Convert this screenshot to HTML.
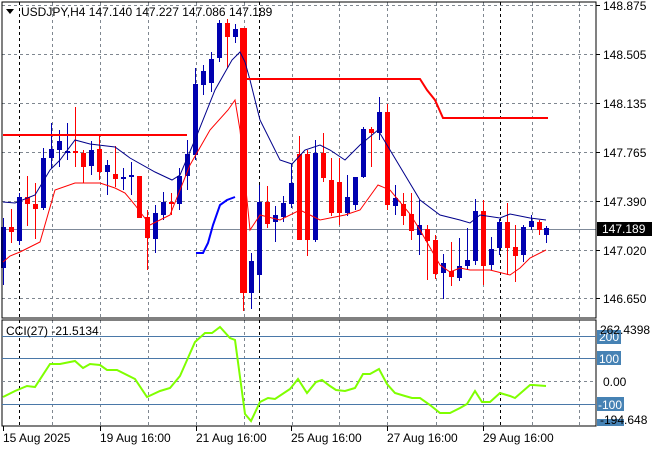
<!DOCTYPE html>
<html><head><meta charset="utf-8"><style>
html,body{margin:0;padding:0;background:#fff;width:660px;height:450px;overflow:hidden}
svg{display:block;font-family:"Liberation Sans","DejaVu Sans",sans-serif}
</style></head><body>
<svg id="s" width="660" height="450" xmlns="http://www.w3.org/2000/svg">
<rect width="660" height="450" fill="#fff"/>
<g id="grid" stroke="#7f8790" stroke-width="1" stroke-dasharray="3,3"></g>
<g id="sep" stroke="#000" stroke-width="1" stroke-dasharray="3,3"></g>
<line x1="2" y1="229.5" x2="596" y2="229.5" stroke="#7f8a99"/>
<g id="c"></g>
<polyline fill="none" stroke="#00008b" stroke-width="1" points="3,202 15,203 35,195 50,170 60,160 75,140 90,144 115,147 130,158 155,172 172,180 180,175 197,135 215,90 232,60 240,52 245,62 250,80 260,120 280,160 292,164 305,150 320,145 330,150 345,160 360,145 378,130 390,150 420,200 440,215 460,220 470,223 480,215 500,218 510,214 530,218 546,220"/>
<polyline fill="none" stroke="#ff0000" stroke-width="1" points="3,262 10,256 20,252 40,242 55,190 75,183 100,183 115,188 125,193 135,205 150,225 170,215 190,165 210,130 228,110 235,100 240,130 250,230 260,215 280,220 300,210 310,215 320,220 345,215 360,210 378,185 390,190 410,214 420,230 440,265 450,272 460,268 470,270 490,270 510,275 520,268 530,258 546,250"/>
<polyline fill="none" stroke="#0000ff" stroke-width="2" points="196,253 203,253 208,243 213,225 220,205 227,200 235,197"/>
<polyline fill="none" stroke="#ff0000" stroke-width="2" points="3,135 187,135"/>
<polyline fill="none" stroke="#ff0000" stroke-width="2" points="245,79 420,79 427,90 435,100 443,118 548,118"/>
<rect x="2" y="2" width="594" height="316" fill="none" stroke="#000"/>
<rect x="2" y="320" width="594" height="106" fill="none" stroke="#000"/>
<g stroke="#4a78a8">
<line x1="2" y1="336.5" x2="596" y2="336.5"/><line x1="2" y1="358.5" x2="596" y2="358.5"/><line x1="2" y1="404.5" x2="596" y2="404.5"/></g>
<line x1="2" y1="381.5" x2="596" y2="381.5" stroke="#7f8790" stroke-dasharray="3,3"/>
<polyline fill="none" stroke="#7fff00" stroke-width="2" points="3,397 15,391 27,386 35,387 50,364 60,364 75,361 83,368 90,364 100,365 107,370 117,370 135,379 147,397 160,391 170,388 180,376 195,342 205,333 212,333 220,327 230,338 235,340 245,414 251,421 260,402 268,398 275,399 290,389 298,379 307,393 316,382 322,380 330,386 336,390 345,391 355,388 363,374 370,374 379,369 387,384 395,393 405,396 412,398 420,398 430,405 440,413 450,413 460,408 467,404 475,391 482,402 490,402 500,393 510,396 515,398 530,385 533,385 546,386"/>
<g font-size="12" fill="#000">
<path d="M6 9 L14 9 L10 14 Z" fill="#000"/>
<text x="21" y="16">USDJPY,H4  147.140 147.227 147.086 147.189</text>
<text x="6" y="335">CCI(27) -21.5134</text>
<g id="ax"></g>
</g>
<rect x="597" y="222" width="55" height="14" fill="#000"/>
<text x="602" y="233" font-size="12" fill="#fff">147.189</text>
<rect x="597" y="330" width="24" height="14" fill="#4682b4"/>
<rect x="597" y="351" width="24" height="14" fill="#4682b4"/>
<rect x="597" y="397" width="27" height="14" fill="#4682b4"/>
<rect x="597" y="419" width="27" height="7" fill="#4682b4"/>
<g font-size="12" fill="#fff"><text x="599" y="341">200</text><text x="599" y="363">100</text><text x="598" y="409">-100</text></g>
<g font-size="12" fill="#000"><text x="600" y="334">262.4398</text><text x="603" y="386">0.00</text><text x="600" y="424">-194.648</text></g>
</svg>
<script>
var NS="http://www.w3.org/2000/svg";
function el(p,t,a){var e=document.createElementNS(NS,t);for(var k in a)e.setAttribute(k,a[k]);p.appendChild(e);return e;}
var g=document.getElementById('grid');
[5,54,103,152,201,250,298].forEach(function(y){el(g,'line',{x1:2,x2:596,y1:y+.5,y2:y+.5});});
[52,100,148,196,244,292,339,387,436,483,532,579].forEach(function(x){el(g,'line',{x1:x+.5,x2:x+.5,y1:2,y2:318});el(g,'line',{x1:x+.5,x2:x+.5,y1:320,y2:426});});
var s=document.getElementById('sep');
[19,259,500].forEach(function(x){el(s,'line',{x1:x+.5,x2:x+.5,y1:2,y2:318});el(s,'line',{x1:x+.5,x2:x+.5,y1:320,y2:426});});
var B='#0000b0',R='#ff0000';
var C=[[3,227,268,218,285,B],[11,227,232,209,243,R],[19,197,241,193,245,B],[27,197,204,176,226,R],[35,204,209,183,239,R],[43,158,208,148,210,B],[51,149,158,123,168,B],[59,141,150,130,167,B],[67,151,153,123,160,B],[75,151,153,107,167,R],[83,153,167,150,183,R],[91,150,166,141,175,B],[99,149,172,136,180,R],[107,165,172,160,195,B],[115,174,179,146,187,R],[123,177,179,168,190,B],[131,175,177,162,195,B],[139,176,218,176,218,R],[147,217,238,210,270,R],[155,213,239,205,253,B],[163,202,215,192,220,B],[171,202,204,193,215,R],[179,176,204,168,210,B],[187,154,176,140,190,B],[195,84,155,68,160,B],[203,71,85,65,95,B],[211,59,83,52,92,B],[219,23,58,20,62,B],[227,23,37,19,68,R],[235,29,37,24,43,B],[243,28,293,28,311,R],[251,261,293,253,309,B],[259,202,275,185,290,B],[267,202,224,186,228,R],[275,215,222,206,242,B],[283,203,217,196,222,B],[291,183,204,164,208,B],[299,154,240,136,240,R],[307,154,240,150,256,R],[315,153,240,140,242,B],[323,153,178,133,182,R],[331,180,213,158,216,R],[339,182,213,158,225,R],[347,197,213,175,216,B],[355,177,205,177,210,B],[363,129,177,127,178,B],[371,129,133,127,167,R],[379,112,133,97,140,B],[387,112,205,104,210,R],[395,198,206,185,215,B],[403,204,216,193,225,R],[411,214,231,193,240,R],[419,225,235,200,255,B],[427,229,241,225,280,R],[435,240,274,235,279,R],[443,263,273,254,299,B],[451,271,277,242,286,R],[459,266,278,238,281,B],[467,260,266,228,270,B],[475,211,261,199,265,B],[483,211,266,200,285,R],[491,249,265,237,270,B],[499,222,248,219,255,B],[507,222,248,203,275,R],[515,247,256,225,282,R],[523,227,255,225,262,B],[531,221,227,215,230,B],[539,222,230,220,235,R],[546,228,235,226,243,B]];
var cg=document.getElementById('c');
C.forEach(function(c){var w=c[0]==243?7:5;
el(cg,'line',{x1:c[0]+.5,x2:c[0]+.5,y1:c[3],y2:c[4],stroke:c[5],'stroke-width':1});
el(cg,'rect',{x:c[0]-(w-1)/2,y:c[1],width:w,height:Math.max(2,c[2]-c[1]),fill:c[5]});});
var ax=document.getElementById('ax');
[[148.875,5],[148.505,54],[148.135,103],[147.765,152],[147.390,201],[147.020,250],[146.650,298]].forEach(function(p){
el(ax,'line',{x1:596,x2:600,y1:p[1]+.5,y2:p[1]+.5,stroke:'#000'});
var t=el(ax,'text',{x:603,y:p[1]+5});t.textContent=p[0].toFixed(3);});
[[3,'15 Aug 2025'],[100,'19 Aug 16:00'],[196,'21 Aug 16:00'],[291,'25 Aug 16:00'],[387,'27 Aug 16:00'],[483,'29 Aug 16:00']].forEach(function(p){
el(ax,'line',{x1:p[0]+.5,x2:p[0]+.5,y1:426,y2:431,stroke:'#000'});
var t=el(ax,'text',{x:p[0],y:442});t.textContent=p[1];});
</script>
</body></html>
